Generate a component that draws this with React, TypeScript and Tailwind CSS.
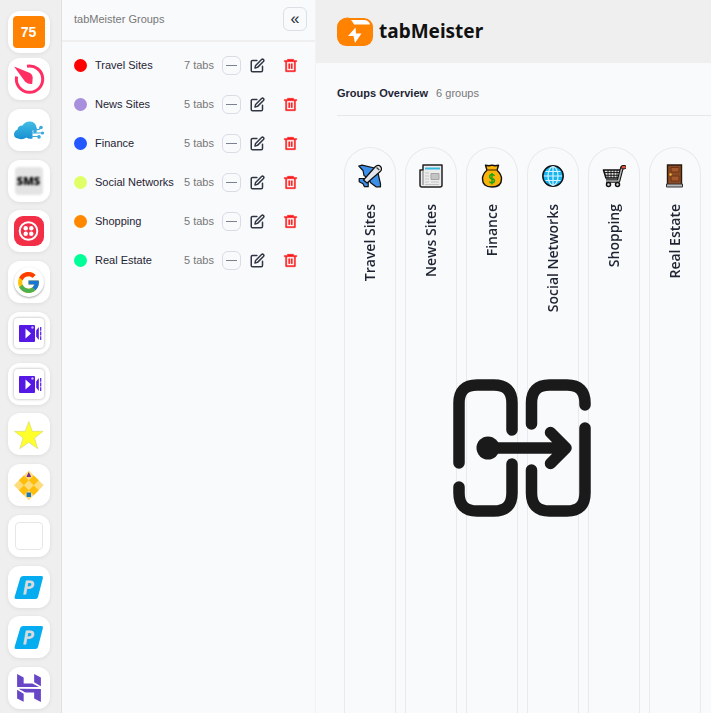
import type { ReactNode } from 'react';
import { FcGoogle } from 'react-icons/fc';
import { SiHostinger } from 'react-icons/si';
import { FiEdit } from 'react-icons/fi';
import { RiDeleteBin6Line } from 'react-icons/ri';

interface Group {
  name: string;
  tabs: number;
  dot: string;
  icon: ReactNode;
}

interface Shortcut {
  label: string;
  icon: ReactNode;
}

const PlaneIcon = () => (
  <svg viewBox="0 0 24 24" className="w-6 h-6" stroke="#111" strokeWidth="1.2" strokeLinejoin="round">
    <path d="M.8 2 4 1.200 16.500 4 9 13.500 6 11.500l-1-5z" fill="#3b8fe8" />
    <path d="M19.500 7 22.500 20v2.800H18l-5-3.800-3-3.500z" fill="#3b8fe8" />
    <path d="M1.200 14.500h5l4 4v4.200H6.500l-1.500-3-3.800-2z" fill="#3b8fe8" />
    <path d="M5.500 16 17.500 2.500q3-2.200 5 0t0 4.700L9 19z" fill="#e4e6ea" />
    <path d="m18.500 3.500 2.800 2.500" stroke="#444" strokeWidth="1.400" />
  </svg>
);

const NewsIcon = () => (
  <svg viewBox="0 0 24 24" className="w-6 h-6">
    <path d="M4 1h19v20q0 2-2 2H3q-2 0-2-2V6h3z" fill="#ececec" stroke="#222" strokeWidth="1.5" strokeLinejoin="round" />
    <path d="M4 6v15" stroke="#777" />
    <path d="M6 4.500h15" stroke="#35b8e0" strokeWidth="2" />
    <path d="M12 9.500h8v6h-8z" fill="#c4c4c4" stroke="#a5a5a5" />
    <path d="M6 9h4M6 12h4M6 15h4M6 18h4M12 18h8M6 20.500h14" stroke="#c5c5c5" />
  </svg>
);

const MoneyIcon = () => (
  <svg viewBox="0 0 24 24" className="w-6 h-6">
    <path
      d="M5.500 1.200q3 1 6.500 0 3.500 1 6.500 0l-1.500 5q4.500 4 4.500 8.800 0 8-9.500 8t-9.500-8q0-5 4.500-8.800z"
      fill="#fbb30a"
      stroke="#111"
      strokeWidth="1.400"
      strokeLinejoin="round"
    />
    <path d="M7 6h10" stroke="#7a5000" strokeWidth="1.500" />
    <path
      d="M12 9v11.500M14.500 11.800q-.8-1.300-2.500-1.300-2.300 0-2.300 2t2.300 2.200 2.400 2-2.400 2.200q-1.800 0-2.700-1.300"
      fill="none"
      stroke="#18a516"
      strokeWidth="1.500"
    />
  </svg>
);

const GlobeIcon = () => (
  <svg viewBox="0 0 24 24" className="w-6 h-6" fill="none">
    <circle cx="12" cy="12" r="10.200" fill="#16b4f2" stroke="#111" strokeWidth="1.500" />
    <path d="M12 2.500v19M3 12h18M4.500 7.500h15M4.500 16.500h15" stroke="#d9f4ff" strokeWidth="1.200" />
    <ellipse cx="12" cy="12" rx="5" ry="9.300" stroke="#d9f4ff" strokeWidth="1.200" />
  </svg>
);

const CartIcon = () => (
  <svg viewBox="0 0 24 24" className="w-6 h-6" fill="none" stroke="#111" strokeLinejoin="round">
    <path d="M1.500 6h17l-2 8H4z" fill="#ddd" strokeWidth="1.600" />
    <path d="M3 8.500h14M3 11.300h13M6 6v8M9 6v8M12 6v8M15 6v8" strokeWidth=".9" />
    <path d="M22 3.500h-2L16.500 17H4" strokeWidth="3.600" />
    <path d="M21 3.500h-1L16.500 17H4" stroke="#b5b5b5" strokeWidth="1.500" />
    <path d="M21 3.200h1.500" stroke="#111" strokeWidth="4.200" strokeLinecap="round" />
    <path d="M21 3.200h1.500" stroke="#e1523d" strokeWidth="2.600" strokeLinecap="round" />
    <circle cx="6.500" cy="20.500" r="2" fill="#ddd" strokeWidth="1.500" />
    <circle cx="15.500" cy="20.500" r="2" fill="#ddd" strokeWidth="1.500" />
  </svg>
);

const DoorIcon = () => (
  <svg viewBox="0 0 24 24" className="w-6 h-6">
    <path d="M4.500 1h14v20h-14z" fill="#8b4a22" stroke="#2b1a10" strokeWidth="1.400" />
    <path d="M8 3.500h8V8H8zM8 12h8v5H8z" fill="#a3592c" stroke="#6c3516" />
    <circle cx="7.500" cy="10.500" r="1.200" fill="#f2b632" />
    <path d="M3.500 20h16v3h-16z" fill="#b9b9b9" stroke="#333" />
  </svg>
);

const groups: Group[] = [
  { name: 'Travel Sites', tabs: 7, dot: 'bg-[#ff0000]', icon: <PlaneIcon /> },
  { name: 'News Sites', tabs: 5, dot: 'bg-[#a78fdd]', icon: <NewsIcon /> },
  { name: 'Finance', tabs: 5, dot: 'bg-[#2457ff]', icon: <MoneyIcon /> },
  { name: 'Social Networks', tabs: 5, dot: 'bg-[#e0ff66]', icon: <GlobeIcon /> },
  { name: 'Shopping', tabs: 5, dot: 'bg-[#ff8800]', icon: <CartIcon /> },
  { name: 'Real Estate', tabs: 5, dot: 'bg-[#00ff99]', icon: <DoorIcon /> },
];

const TimerIcon = () => (
  <svg viewBox="0 0 42 42" className="w-full h-full">
    <path d="M19 8.200A13.200 13.200 0 1 1 8.600 18.500" fill="none" stroke="#ff2e63" strokeWidth="3" />
    <path d="M6 8.500 22 15q2.800 1.500 2.700 4.500l-.5 6.500q-4.200.5-7.200-2.500z" fill="#ff2e63" />
  </svg>
);

const CloudIcon = () => (
  <svg viewBox="0 0 42 42" className="w-full h-full">
    <defs>
      <linearGradient id="cloud" x1="0" y1="0" x2="0" y2="1">
        <stop offset="0" stopColor="#44bde6" />
        <stop offset="1" stopColor="#168fd2" />
      </linearGradient>
    </defs>
    <path
      d="M10 29.500q-4-.5-4-4t3.500-5q.5-4 5-4 3-4.500 8-4t6 6l1 3h-5v8q-4 1-6-1-4 3-8.500 1z"
      fill="url(#cloud)"
    />
    <g stroke="#3aa9dc" strokeWidth="1.200" fill="#3aa9dc">
      <path d="M23 20.500h8l2-2M23 24h11M23 27.500h6l3-1" fill="none" />
      <circle cx="33" cy="18.500" r="1.200" />
      <circle cx="27" cy="22.500" r="1.200" />
      <circle cx="34.500" cy="24" r="1" />
      <circle cx="31" cy="28" r="1.200" />
    </g>
  </svg>
);

const SmsIcon = () => (
  <svg viewBox="0 0 42 42" className="w-full h-full">
    <rect x="7" y="7" width="28" height="28" rx="4" fill="#e4e4e4" className="blur-[1px]" />
    <text x="20.500" y="25" textAnchor="middle" className="text-[11px] font-black blur-[1px]" fontFamily="Open Sans, sans-serif">
      SMS
    </text>
  </svg>
);

const TwilioIcon = () => (
  <svg viewBox="0 0 42 42" className="w-full h-full">
    <rect x="6" y="6" width="30" height="30" rx="9" fill="#f22f46" />
    <circle cx="20.500" cy="21" r="8.800" fill="none" stroke="#fff" strokeWidth="2" />
    <g fill="#fff">
      <circle cx="17.700" cy="18.200" r="2.200" />
      <circle cx="23.300" cy="18.200" r="2.200" />
      <circle cx="17.700" cy="23.800" r="2.200" />
      <circle cx="23.300" cy="23.800" r="2.200" />
    </g>
  </svg>
);

const GoogleIcon = () => (
  <span className="flex items-center justify-center w-[30px] h-[30px] rounded-full bg-white shadow-[0_1px_2px_rgba(0,0,0,0.35)]">
    <FcGoogle size={25} />
  </span>
);

const VideoIcon = () => (
  <span className="w-[30px] h-[30px] rounded bg-white shadow-[0_0_3px_rgba(0,0,0,0.35)]">
    <svg viewBox="0 0 30 30" className="w-full h-full">
      <rect x="5" y="7" width="16" height="17" rx="1" fill="#5618e4" />
      <path d="m11.500 10.500 5.500 5-5.500 5z" fill="#fff" />
      <circle cx="18.500" cy="9.500" r="1.200" fill="#c9b3ff" />
      <path d="M22.200 12.500 24.800 9v13l-2.600-3.500z" fill="#5618e4" />
      <path d="M26.700 9v13" stroke="#5618e4" strokeWidth="1.200" strokeDasharray="3.800 .8" />
    </svg>
  </span>
);

const StarIcon = () => (
  <svg viewBox="0 0 42 42" className="w-full h-full">
    <path
      d="m20.800 8.500 3.500 9.800h10.800l-8.600 6.700 3.200 10.700-8.900-6.400-8.900 6.400L15.100 25l-8.600-6.700h10.800z"
      fill="#ffff2b"
      stroke="#dada76"
      strokeWidth=".7"
    />
  </svg>
);

const BoardIcon = () => (
  <svg viewBox="0 0 42 42" className="w-full h-full">
    <g transform="rotate(45 20.800 21.300)">
      <rect x="10.300" y="10.800" width="21" height="21" fill="#ffdc7a" />
      <path d="M17.300 10.800h7v21h-7zM10.300 17.800h21v7h-21z" fill="#ffbe0b" />
      <path d="M17.300 17.800h7v7h-7z" fill="#ffdc7a" />
    </g>
    <path d="m20.800 8 2.400 5h-4.800z" fill="#712b91" />
    <path d="M18.600 28.500H23V33h-4.400z" fill="#1a78bd" />
  </svg>
);

const BlankIcon = () => <span className="w-7 h-7 rounded-sm border border-[#e5e7eb] bg-white" />;

const ParkIcon = () => (
  <svg viewBox="0 0 42 42" className="w-full h-full">
    <path d="M15.500 10h18q2 0 1.400 2L30 31q-.6 2-2.600 2H8q-2 0-1.400-2l5.600-19q.6-2 3.300-2z" fill="#05adf0" />
    <text
      x="20.500"
      y="27.500"
      textAnchor="middle"
      className="text-[17px] italic"
      fontFamily="DejaVu Sans, sans-serif"
      fill="#dcdcdc"
      stroke="#dcdcdc"
    >
      P
    </text>
  </svg>
);

const shortcuts: Shortcut[] = [
  { label: 'Timer', icon: <TimerIcon /> },
  { label: 'Cloud', icon: <CloudIcon /> },
  { label: 'Messages', icon: <SmsIcon /> },
  { label: 'Twilio', icon: <TwilioIcon /> },
  { label: 'Google', icon: <GoogleIcon /> },
  { label: 'Video', icon: <VideoIcon /> },
  { label: 'Video 2', icon: <VideoIcon /> },
  { label: 'Favorites', icon: <StarIcon /> },
  { label: 'Board', icon: <BoardIcon /> },
  { label: 'Blank', icon: <BlankIcon /> },
  { label: 'Parking', icon: <ParkIcon /> },
  { label: 'Parking 2', icon: <ParkIcon /> },
  { label: 'Hostinger', icon: <SiHostinger size={28} color="#6747c7" /> },
];

const railButton =
  'flex items-center justify-center w-[42px] h-[42px] shrink-0 rounded-xl bg-white shadow-[0_1px_4px_rgba(0,0,0,0.08)]';

function Rail() {
  return (
    <nav className="flex flex-col items-center w-[62px] shrink-0 pt-[11px] pb-1 pr-1 bg-[#efefef] border-r border-[#e0e0e0]">
      <button className={railButton} aria-label="All tabs">
        <span className="flex items-center justify-center w-8 h-8 rounded bg-[#ff8200] text-white text-sm font-bold">75</span>
      </button>
      <div className="flex flex-col flex-1 justify-between mt-[5px]">
        {shortcuts.map((s) => (
          <button key={s.label} className={railButton} aria-label={s.label}>
            {s.icon}
          </button>
        ))}
      </div>
    </nav>
  );
}

function GroupRow({ group }: { group: Group }) {
  return (
    <li className="flex items-center h-[39px] pl-3 pr-[17px]">
      <span className={`w-[13px] h-[13px] shrink-0 rounded-full ${group.dot}`} />
      <span className="flex-1 ml-2 whitespace-nowrap text-[#1f2433]">{group.name}</span>
      <span className="mr-2 whitespace-nowrap text-[#777]">{group.tabs} tabs</span>
      <button
        className="flex items-center justify-center w-[19px] h-[19px] rounded-md border border-[#d9dce2]"
        aria-label={`Collapse ${group.name}`}
      >
        <span className="w-[11px] h-px bg-[#7b8190]" />
      </button>
      <button className="ml-[9px] text-[#303644]" aria-label={`Edit ${group.name}`}>
        <FiEdit size={15} strokeWidth={2.4} />
      </button>
      <button className="ml-[18px] text-[#fb1818]" aria-label={`Delete ${group.name}`}>
        <RiDeleteBin6Line size={15} stroke="currentColor" strokeWidth={0.6} />
      </button>
    </li>
  );
}

function GroupsPanel() {
  return (
    <aside className="w-[254px] shrink-0 bg-[#f9fafc] border-r border-[#f1f2f4] text-[11px]">
      <div className="flex items-center justify-between h-[42px] pl-3 pr-2 pb-0.5 border-b-2 border-[#efefef]">
        <h2 className="text-[#777]">tabMeister Groups</h2>
        <button
          className="flex items-center justify-center w-6 h-6 rounded-md border border-[#dcdfe4] text-base text-[#222835]"
          aria-label="Collapse panel"
        >
          «
        </button>
      </div>
      <ul className="pt-1">
        {groups.map((g) => (
          <GroupRow key={g.name} group={g} />
        ))}
      </ul>
    </aside>
  );
}

function Logo() {
  return (
    <div className="flex items-center">
      <svg viewBox="0 0 36 29" className="w-9 h-[29px]">
        <rect y="1" width="36" height="28" rx="9" fill="#ff8200" />
        <path d="M2 7Q6-1 13 1l3 6z" fill="#ff8200" />
        <path d="M14 3h13q5 0 6 4.500H17q-1-2.500-3-4.500z" fill="#fff" />
        <path d="m18.500 10.500-7.500 8.500h5.500l1.500 7 6.500-9.500h-5.500z" fill="#fff" />
      </svg>
      <span className="ml-1.5 font-['Noto_Sans',sans-serif] text-[19px] font-bold text-[#111]">tabMeister</span>
    </div>
  );
}

// Two tab frames with an arrow passing from one to the other
function MoveTabs() {
  return (
    <svg
      viewBox="0 0 138 138"
      className="absolute left-[116px] top-[232px] w-[138px] h-[138px]"
      fill="none"
      stroke="#1a1a1a"
      strokeWidth="11.500"
      strokeLinecap="round"
      strokeLinejoin="round"
    >
      <path d="M6 84V24Q6 6 24 6h17q18 0 18 18v27" />
      <path d="M6 108v6q0 18 18 18h17q18 0 18-18V85" />
      <path d="M78.500 45V24q0-18 18-18h17.500q18 0 18 18v2" />
      <path d="M132 49v65q0 18-18 18H96.500q-18 0-18-18V91" />
      <path d="M35 69h78M97.500 53.500 113 69 97.500 84.500" />
      <circle cx="35" cy="69" r="11.500" fill="#1a1a1a" stroke="none" />
    </svg>
  );
}

export default function App() {
  return (
    <div className="flex h-screen overflow-hidden bg-[#f9fafc] font-['Liberation_Sans',Arial,sans-serif]">
      <Rail />
      <GroupsPanel />
      <main className="flex flex-col flex-1 min-w-0">
        <header className="flex items-center h-[63px] shrink-0 pl-[21px] bg-[#efefef]">
          <Logo />
        </header>
        <section className="relative flex flex-col flex-1 ml-[21px] min-h-0">
          <div className="flex items-center gap-2 h-[53px] shrink-0 pt-2 border-b border-[#e5e7eb] text-[11px]">
            <h1 className="font-bold text-[#1f2433]">Groups Overview</h1>
            <span className="text-[#777]">6 groups</span>
          </div>
          <div className="relative flex flex-1 gap-[9px] pl-[7px] mt-[31px]">
            {groups.map((g) => (
              <article
                key={g.name}
                className="flex flex-col items-center w-[52px] shrink-0 pt-4 rounded-t-full border border-b-0 border-[#e8eaed]"
              >
                {g.icon}
                <h3 className="mt-4 rotate-180 [writing-mode:vertical-rl] font-['Open_Sans',sans-serif] text-sm font-semibold text-[#1f2433]">
                  {g.name}
                </h3>
              </article>
            ))}
            <MoveTabs />
          </div>
        </section>
      </main>
    </div>
  );
}
